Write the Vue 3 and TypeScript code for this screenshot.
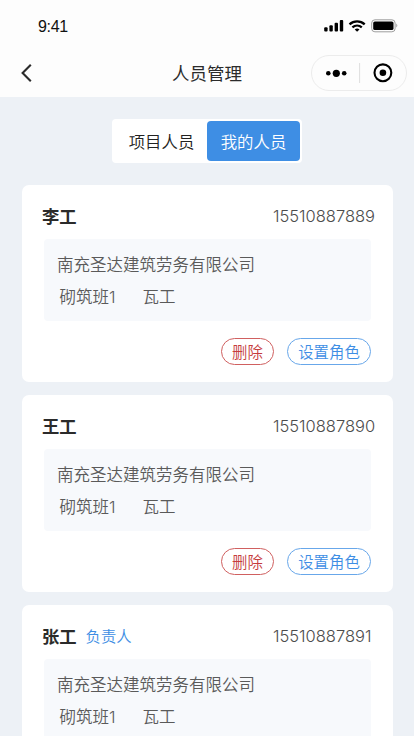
<script setup lang="ts">
import { ref } from 'vue'

interface Worker {
  name: string
  role?: string
  phone: string
  company: string
  team: string
  job: string
}

const tabs: string[] = ['项目人员', '我的人员']
const activeTab = ref(1)

const company = '南充圣达建筑劳务有限公司'
const workers: Worker[] = [
  { name: '李工', phone: '15510887889', company, team: '砌筑班1', job: '瓦工' },
  { name: '王工', phone: '15510887890', company, team: '砌筑班1', job: '瓦工' },
  { name: '张工', role: '负责人', phone: '15510887891', company, team: '砌筑班1', job: '瓦工' },
]
</script>

<template>
  <div class="screen">
    <header class="header">
      <div class="status">
        <span class="time">9:41</span>
        <svg class="status-icons" width="76" height="16" viewBox="0 0 76 16">
          <rect x="1.2" y="9.2" width="3.4" height="4.4" rx="1" />
          <rect x="6.4" y="7.2" width="3.4" height="6.4" rx="1" />
          <rect x="11.6" y="4.8" width="3.4" height="8.8" rx="1" />
          <rect x="16.8" y="2" width="3.4" height="11.6" rx="1" />
          <g fill="none" stroke="#000" stroke-width="2.3">
            <path d="M26.5 6.3a11.3 11.3 0 0 1 15.2 0" />
            <path d="M29.4 9.4a7.2 7.2 0 0 1 9.4 0" />
          </g>
          <path d="M34.1 13.8l-2.4-2.3a3.6 3.6 0 0 1 4.8 0z" />
          <rect x="48.7" y="1.8" width="23.4" height="12" rx="3.2" fill="none" stroke="#9d9d9d" />
          <rect x="50.2" y="3.5" width="20.3" height="8.6" rx="1.6" />
          <path d="M73.3 5.6q2 2 0 4z" fill="#999" />
        </svg>
      </div>
      <div class="nav">
        <svg class="back" width="14" height="20" viewBox="0 0 14 20">
          <path d="M10.8 1.8L2.6 10l8.2 8.2" fill="none" stroke="#2b2b2b" stroke-width="2.1" />
        </svg>
        <h1 class="title">人员管理</h1>
        <div class="capsule">
          <svg width="94" height="34" viewBox="0 0 94 34">
            <circle cx="16.3" cy="17.3" r="2.3" />
            <circle cx="24.3" cy="17.3" r="3.6" />
            <circle cx="32.2" cy="17.3" r="2.3" />
            <path d="M47.6 7v20" stroke="#dedede" />
            <circle cx="70.9" cy="16.8" r="8.4" fill="none" stroke="#000" stroke-width="2.1" />
            <circle cx="70.9" cy="16.8" r="3.3" />
          </svg>
        </div>
      </div>
    </header>

    <main class="content">
      <div class="tabs">
        <button
          v-for="(tab, i) in tabs"
          :key="tab"
          class="tab"
          :class="{ active: activeTab === i }"
          @click="activeTab = i"
        >{{ tab }}</button>
      </div>

      <section v-for="w in workers" :key="w.phone" class="card">
        <div class="card-head">
          <span class="name">{{ w.name }}</span>
          <span v-if="w.role" class="role">{{ w.role }}</span>
          <span class="phone">{{ w.phone }}</span>
        </div>
        <div class="info">
          <div class="company">{{ w.company }}</div>
          <div class="detail">
            <span class="team">{{ w.team }}</span>
            <span>{{ w.job }}</span>
          </div>
        </div>
        <div v-if="!w.role" class="actions">
          <button class="pill danger">删除</button>
          <button class="pill primary">设置角色</button>
        </div>
      </section>
    </main>
  </div>
</template>

<style>
body {
  margin: 0;
  overflow: hidden;
}
</style>

<style scoped>
.screen {
  width: 414px;
  height: 736px;
  overflow: hidden;
  display: flex;
  flex-direction: column;
  background: #edf1f6;
  font-family: Inter, "Noto Sans CJK SC", sans-serif;
  color: #2b2b2b;
}
button {
  font: inherit;
  padding: 0;
  border: 0;
  background: none;
  white-space: nowrap;
}
.header {
  height: 97px;
  flex: none;
  background: #fdfdfd;
}
.status {
  height: 54px;
  box-sizing: border-box;
  padding: 17px 14px 0 38px;
  display: flex;
  justify-content: space-between;
  align-items: flex-start;
}
.time {
  font: 16px/20px "Liberation Sans", sans-serif;
  letter-spacing: -0.3px;
  color: #111;
}
.status-icons {
  margin-right: 1px;
  margin-top: 1px;
}
.nav {
  display: grid;
  grid-template-columns: 1fr auto 1fr;
  align-items: center;
  height: 38px;
  padding: 0 7px 0 20px;
}
.title {
  margin: 1px 0 0 -13px;
  font-size: 17.5px;
  line-height: 26px;
  font-weight: 400;
}
.capsule {
  justify-self: end;
  width: 94px;
  height: 34px;
  border: 1px solid #ececec;
  border-radius: 18px;
}
.capsule svg {
  display: block;
}
.content {
  display: flex;
  flex-direction: column;
  align-items: center;
  padding: 22px 21px 0 22px;
}
.tabs {
  display: flex;
  box-sizing: border-box;
  width: 190px;
  height: 44px;
  margin: 0 1px 22px 0;
  padding: 2px;
  background: #fff;
  border-radius: 4px;
}
.tab {
  flex: 1;
  font-size: 16.4px;
  font-weight: 350;
  line-height: 42px;
  color: #222;
  border-radius: 4px;
  padding-left: 2px;
}
.tab.active {
  flex: none;
  width: 93px;
  background: #3e8ee4;
  color: #fff;
  padding-left: 0;
}
.card {
  flex: none;
  box-sizing: border-box;
  width: 371px;
  height: 197px;
  margin-bottom: 13px;
  padding: 0 22px;
  background: #fff;
  border-radius: 7px;
}
.card-head {
  display: flex;
  align-items: center;
  height: 54px;
  padding-top: 7px;
  box-sizing: border-box;
  margin-left: -2px;
}
.name {
  font-size: 17.3px;
  font-weight: 600;
}
.role {
  margin: 0 0 2px 9px;
  font-size: 15.3px;
  font-weight: 350;
  color: #3e8ee4;
}
.phone {
  margin-left: auto;
  width: 98px;
  font-size: 16.5px;
  font-weight: 300;
  color: #4c4c4c;
}
.info {
  height: 82px;
  box-sizing: border-box;
  padding: 10px 13px 0;
  background: #f7f9fc;
  border-radius: 4px;
  font-size: 16.5px;
  font-weight: 350;
  line-height: 32px;
  color: #5a5a5a;
}
.detail {
  display: flex;
  padding-left: 2.5px;
}
.team {
  width: 83px;
}
.actions {
  display: flex;
  justify-content: flex-end;
  gap: 13px;
  margin-top: 17px;
}
.pill {
  box-sizing: border-box;
  height: 27px;
  border: 1px solid;
  border-radius: 14px;
  font-size: 15.4px;
  font-weight: 350;
  padding-top: 1px;
  line-height: 26px;
}
.danger {
  width: 53px;
  color: #c63c3c;
  border-color: #d06060;
}
.primary {
  width: 84px;
  color: #3e8ee4;
  border-color: #68a7ea;
}
</style>
